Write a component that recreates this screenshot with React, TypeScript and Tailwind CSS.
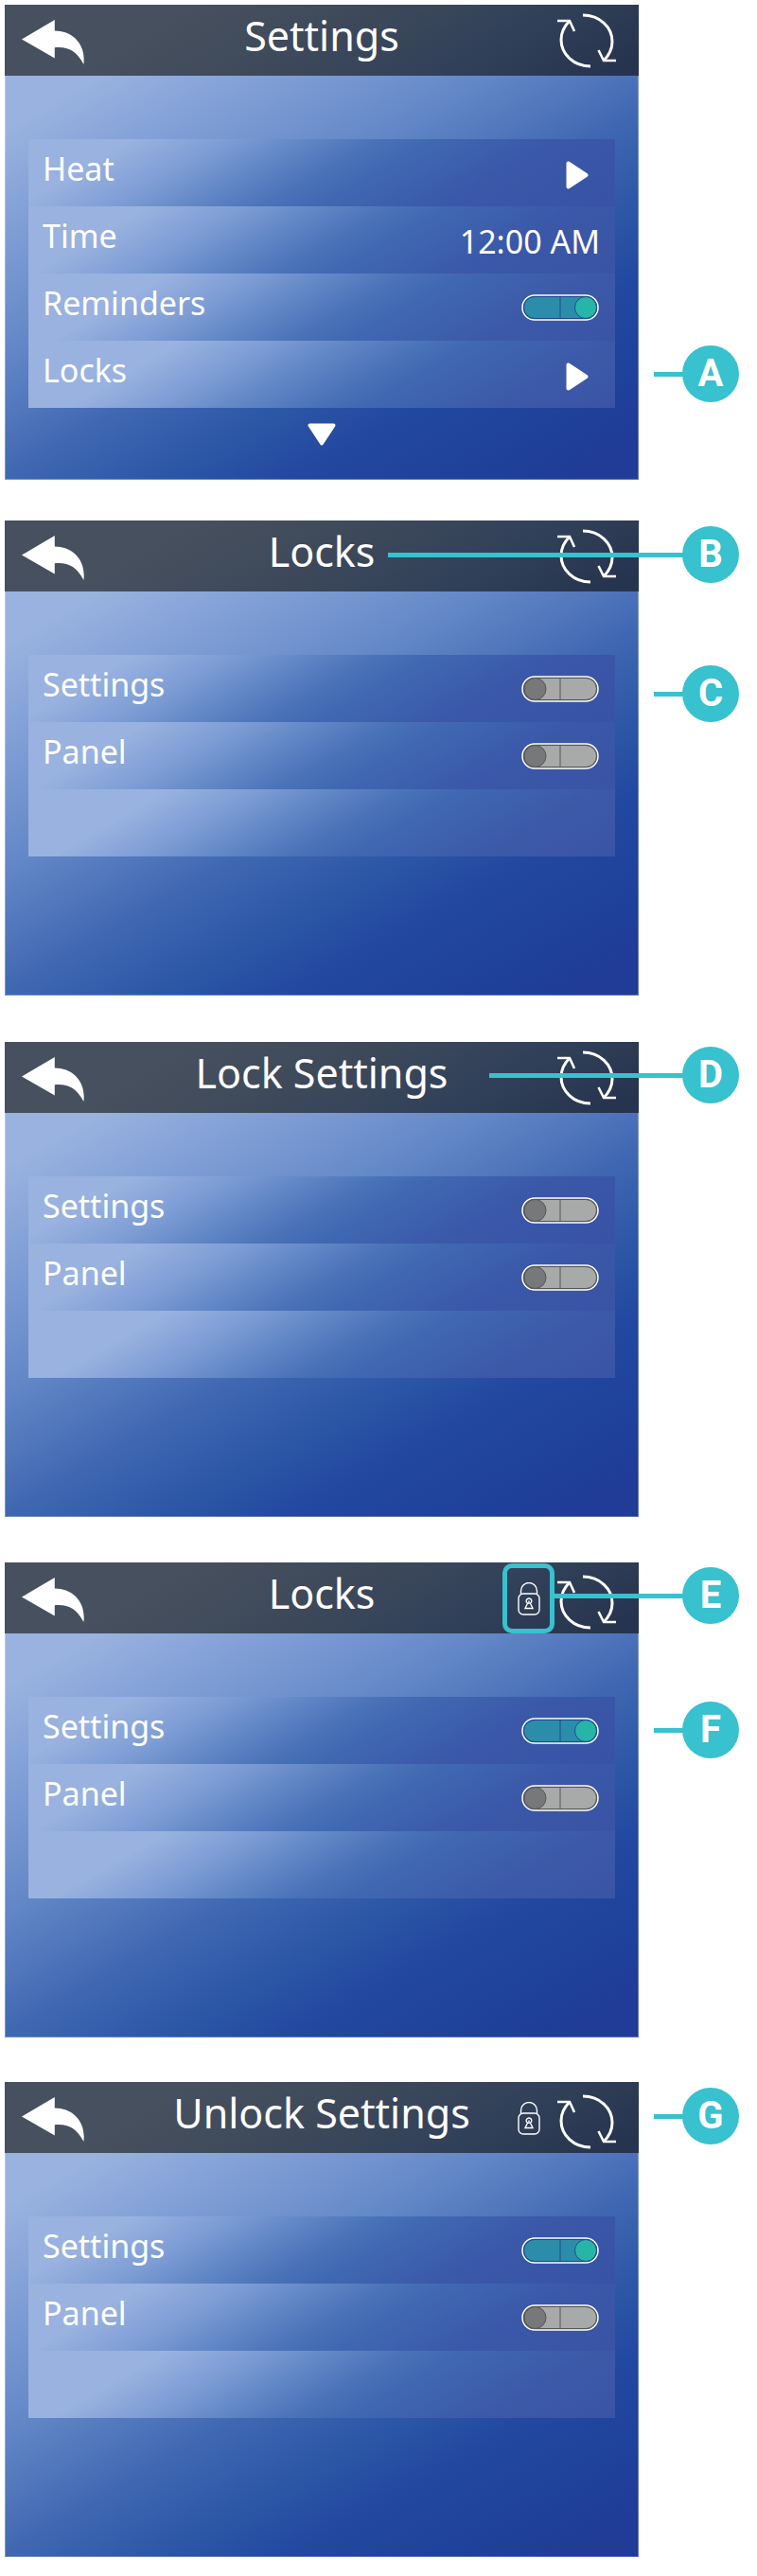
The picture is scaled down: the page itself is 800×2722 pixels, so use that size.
import { useState } from 'react'

interface RowData {
  label: string
  kind: 'arrow' | 'value' | 'toggle' | 'empty'
  value?: string
  on?: boolean
}

interface CalloutData {
  letter: string
  gap: string
  line: string
}

interface ScreenData {
  title: string
  spacing: string
  rows: RowData[]
  callouts: CalloutData[]
  more?: boolean
  lock?: 'plain' | 'framed'
}

const lockRows = (on: boolean): RowData[] => [
  { label: 'Settings', kind: 'toggle', on },
  { label: 'Panel', kind: 'toggle', on: false },
  { label: '', kind: 'empty' },
]

const SCREENS: ScreenData[] = [
  {
    title: 'Settings',
    spacing: 'mt-0',
    rows: [
      { label: 'Heat', kind: 'arrow' },
      { label: 'Time', kind: 'value', value: '12:00 AM' },
      { label: 'Reminders', kind: 'toggle', on: true },
      { label: 'Locks', kind: 'arrow' },
    ],
    callouts: [{ letter: 'A', gap: 'mt-[360px]', line: 'w-[31px]' }],
    more: true,
  },
  {
    title: 'Locks',
    spacing: 'mt-[43px]',
    rows: lockRows(false),
    callouts: [
      { letter: 'B', gap: 'mt-1.5', line: 'w-[312px]' },
      { letter: 'C', gap: 'mt-[87px]', line: 'w-[31px]' },
    ],
  },
  {
    title: 'Lock Settings',
    spacing: 'mt-[49px]',
    rows: lockRows(false),
    callouts: [{ letter: 'D', gap: 'mt-[5px]', line: 'w-[205px]' }],
  },
  {
    title: 'Locks',
    spacing: 'mt-12',
    rows: lockRows(true),
    callouts: [
      { letter: 'E', gap: 'mt-[5px]', line: 'w-[136px]' },
      { letter: 'F', gap: 'mt-[82px]', line: 'w-[31px]' },
    ],
    lock: 'framed',
  },
  {
    title: 'Unlock Settings',
    spacing: 'mt-[47px]',
    rows: lockRows(true),
    callouts: [{ letter: 'G', gap: 'mt-1.5', line: 'w-[31px]' }],
    lock: 'plain',
  },
]

// Lower rows hold the highlight a little longer before fading to blue
const ROW_FILLS = [
  'bg-[linear-gradient(150deg,#99b2df_15%,#7f9ed6_28%,#6388c6_39%,#4a72b8_50%,#4068b2_58%,#3a57a8_76%,#3853a5_100%)]',
  'bg-[linear-gradient(150deg,#99b2df_17%,#7f9ed6_30%,#6388c6_41%,#4a72b8_52%,#4068b2_60%,#3a57a8_79%,#3a54a5_100%)]',
  'bg-[linear-gradient(150deg,#99b2df_20%,#7f9ed6_32%,#6388c6_43%,#4a72b8_54%,#4068b2_62%,#3c59a8_81%,#3a54a5_100%)]',
  'bg-[linear-gradient(150deg,#99b2df_22%,#7f9ed6_34%,#6388c6_45%,#4a72b8_57%,#4068b2_64%,#3c59a8_83%,#3a54a5_100%)]',
]

function BackIcon() {
  return (
    <svg width="66" height="47" viewBox="0 0 66 47" fill="white" aria-hidden="true">
      <path d="M0 20.5 34.8 0V11.6C53 11.6 68 25 65.4 47 58 32.5 48 28 34.8 29.3V40.5Z" />
    </svg>
  )
}

function RefreshIcon() {
  return (
    <svg width="64" height="58" viewBox="0 0 64 58" fill="none" stroke="white" strokeWidth="3" aria-hidden="true">
      <path d="M28 2C46 2 59 15 59 30 59 38 56 44 50 50" />
      <path d="M36 56C18 56 5 43 5 28 5 20 8 14 14 8" />
      <path d="M1 8H14L19 19M44.500 39 50 50H63" strokeWidth="2.600" />
    </svg>
  )
}

function LockIcon() {
  return (
    <svg width="24" height="35" viewBox="0 0 24 35" fill="none" stroke="white" strokeWidth="1.400" aria-hidden="true">
      <path d="M3.500 12V9a8.500 8.500 0 0 1 17 0v3" />
      <rect x="1" y="12" width="22" height="22" rx="5" />
      <path d="M12 17a2.800 2.800 0 0 0-1.500 5.200L8 27.500H16L13.500 22.200A2.800 2.800 0 0 0 12 17ZM12 19.500V23" />
    </svg>
  )
}

function Toggle({ label, initial }: { label: string; initial: boolean }) {
  const [on, setOn] = useState(initial)
  const edge = on ? '#1c4a8c' : '#555656'
  return (
    <label className="relative cursor-pointer">
      <input
        type="checkbox"
        aria-label={label}
        checked={on}
        onChange={(e) => setOn(e.target.checked)}
        className="absolute inset-0 opacity-0"
      />
      <svg width="82" height="28" viewBox="0 0 82 28" aria-hidden="true" className="block">
        <rect x="1" y="1" width="80" height="26" rx="13" fill={edge} stroke="white" strokeWidth="1.500" />
        <rect x="2.500" y="2.500" width="77" height="23" rx="11.500" fill={on ? '#2c8daa' : '#a8aaa9'} stroke={edge} />
        <path d="M41 2V26" stroke={edge} />
        <circle cx={on ? 68 : 14.500} cy="14" r="11.500" fill={on ? '#27b5a9' : '#77787a'} stroke={edge} />
      </svg>
    </label>
  )
}

function Row({ row, fill }: { row: RowData; fill: string }) {
  return (
    <li className={`flex h-[71px] items-center justify-between pl-[15px] ${fill}`}>
      <span className="pb-[9px]">{row.label}</span>
      {row.kind === 'value' && <span className="pt-0.5 pr-4">{row.value}</span>}
      {row.kind === 'toggle' && (
        <div className="pr-[17px]">
          <Toggle label={row.label} initial={!!row.on} />
        </div>
      )}
      {row.kind === 'arrow' && (
        <button aria-label={`Open ${row.label}`} className="pt-1 pr-7">
          <svg width="24" height="30" viewBox="0 0 24 30" fill="white" stroke="white" strokeWidth="4" strokeLinejoin="round" aria-hidden="true">
            <path d="M2.500 2.500V27.500L21.500 15Z" />
          </svg>
        </button>
      )}
    </li>
  )
}

function Callout({ letter, gap, line }: CalloutData) {
  return (
    <div className={`flex items-center justify-end ${gap}`}>
      <div className={`-mr-px h-[5px] shrink-0 bg-[#38c1ce] ${line}`} />
      <div className="flex size-15 shrink-0 items-center justify-center rounded-full bg-[#38c1ce] font-['Roboto',sans-serif] text-[40px] leading-none font-bold text-white">
        {letter}
      </div>
    </div>
  )
}

function Screen({ title, spacing, rows, callouts, more, lock }: ScreenData) {
  return (
    <section className={`flex ${spacing}`}>
      <div className="min-h-[502px] min-w-0 flex-1 bg-[linear-gradient(150deg,#99b2df_15%,#82a0d7_26%,#6488c7_41%,#4f75bb_50%,#4068b2_56%,#2c57a6_67%,#2248a0_76%,#1f429a_86%,#203c97_95%)] shadow-[inset_0_0_0_1px_rgba(255,255,255,0.3)]">
        <header className="grid h-[75px] grid-cols-[1fr_auto_1fr] items-start bg-[linear-gradient(150deg,#47505e_25%,#3d495a_50%,#32415a_72%,#27344f_95%)] px-[18px]">
          <button aria-label="Back" className="justify-self-start pt-4">
            <BackIcon />
          </button>
          <h2 className="pt-[3px] text-[43px] leading-[60px]">{title}</h2>
          <div className="flex justify-self-end pr-[5px]">
            {lock && (
              <div
                className={
                  lock === 'framed'
                    ? 'mt-px flex h-[74px] w-[55px] items-center justify-center rounded-[10px] border-5 border-[#38c1ce]'
                    : 'mt-px flex h-[74px] w-[55px] items-center justify-center'
                }
              >
                <LockIcon />
              </div>
            )}
            <button aria-label="Refresh" className="pt-[9px] pl-0.5">
              <RefreshIcon />
            </button>
          </div>
        </header>

        <ul className="mx-[25px] mt-[67px] text-[34px] leading-[46px]">
          {rows.map((row, i) => (
            <Row key={i} row={row} fill={ROW_FILLS[i]} />
          ))}
        </ul>

        {more && (
          <div className="flex justify-center pt-4">
            <button aria-label="Show more">
              <svg width="30" height="24" viewBox="0 0 30 24" fill="white" stroke="white" strokeWidth="4" strokeLinejoin="round" aria-hidden="true">
                <path d="M2.500 2.500H27.500L15 21.500Z" />
              </svg>
            </button>
          </div>
        )}
      </div>

      {/* Long leader lines run left, over the screen's title bar */}
      <div className="relative w-[106px] shrink-0">
        {callouts.map((c) => (
          <Callout key={c.letter} {...c} />
        ))}
      </div>
    </section>
  )
}

export default function App() {
  return (
    <main className="min-h-screen bg-white pt-[5px] pr-[19px] pb-5 pl-[5px] font-['Noto_Sans','Open_Sans',sans-serif] text-white">
      {SCREENS.map((s) => (
        <Screen key={s.callouts[0].letter} {...s} />
      ))}
    </main>
  )
}
